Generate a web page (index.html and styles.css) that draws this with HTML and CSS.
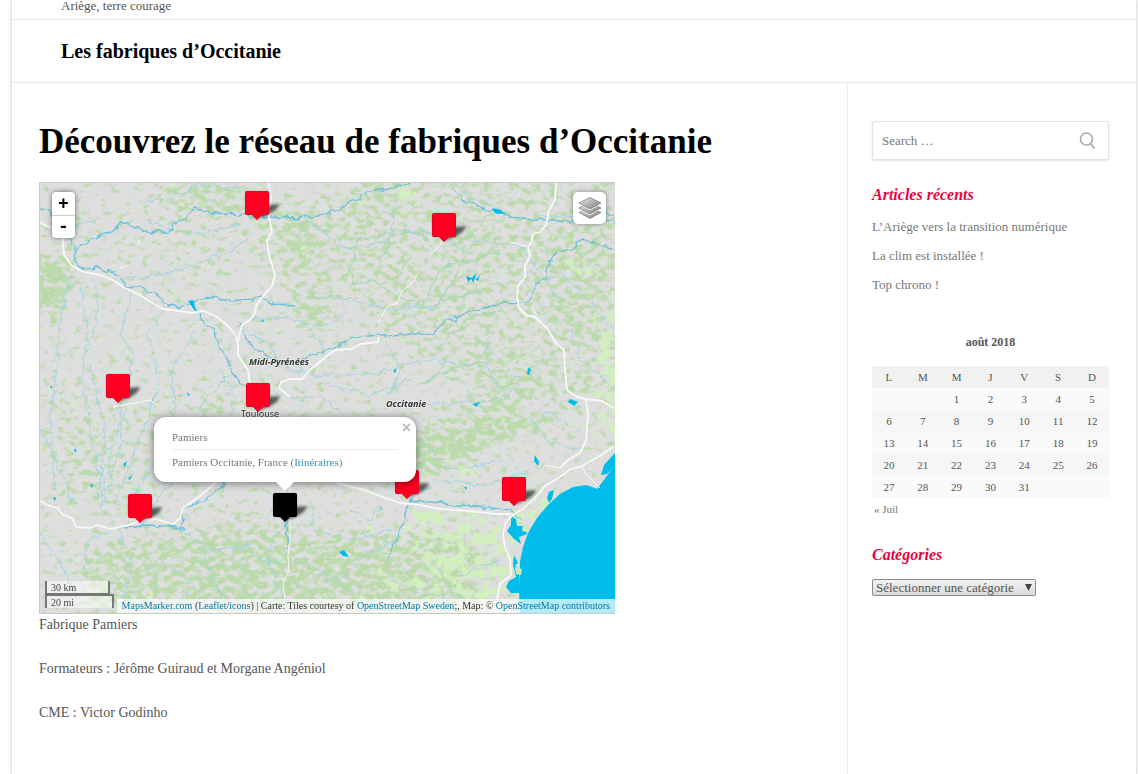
FILE: index.html
```
<!DOCTYPE html>
<html lang="fr">
<head>
<meta charset="utf-8">
<title>Les fabriques d’Occitanie</title>
<link rel="stylesheet" href="styles.css">
</head>
<body>
<div class="page">
  <header>
    <p class="tagline">Ariège, terre courage</p>
    <div class="site-name">Les fabriques d’Occitanie</div>
  </header>
  <div class="columns">
    <main class="content">
      <h1>Découvrez le réseau de fabriques d’Occitanie</h1>
      <div class="map">
        <svg class="tiles" viewBox="40 183 575 430" preserveAspectRatio="xMidYMid slice" role="img" aria-label="Carte des fabriques d’Occitanie">
          <defs>
            <filter id="forest" filterUnits="userSpaceOnUse" x="30" y="173" width="595" height="450" color-interpolation-filters="sRGB">
              <feGaussianBlur in="SourceAlpha" stdDeviation="8" result="density"/>
              <feTurbulence type="fractalNoise" baseFrequency=".12 .17" numOctaves="4" seed="7"/>
              <feColorMatrix values="0 0 0 0 0  0 0 0 0 0  0 0 0 0 0  1 0 0 0 0" result="noise"/>
              <feComposite in="noise" in2="density" operator="arithmetic" k1="0" k2="1" k3=".34" k4="0"/>
              <feComponentTransfer result="cover"><feFuncA type="linear" slope="5" intercept="-3.050"/></feComponentTransfer>
              <feFlood flood-color="#bbdaab"/>
              <feComposite in2="cover" operator="in"/>
            </filter>
            <filter id="scrub" filterUnits="userSpaceOnUse" x="30" y="173" width="595" height="450" color-interpolation-filters="sRGB">
              <feGaussianBlur in="SourceAlpha" stdDeviation="7" result="density"/>
              <feTurbulence type="fractalNoise" baseFrequency=".09" numOctaves="4" seed="23"/>
              <feColorMatrix values="0 0 0 0 0  0 0 0 0 0  0 0 0 0 0  1 0 0 0 0" result="noise"/>
              <feComposite in="noise" in2="density" operator="arithmetic" k1="0" k2="1" k3=".4" k4="0"/>
              <feComponentTransfer result="cover"><feFuncA type="linear" slope="7" intercept="-5.200"/></feComponentTransfer>
              <feFlood flood-color="#d2f0bd"/>
              <feComposite in2="cover" operator="in"/>
            </filter>
            <filter id="meander" filterUnits="userSpaceOnUse" x="30" y="173" width="595" height="450">
              <feTurbulence type="fractalNoise" baseFrequency=".11" numOctaves="2" seed="4"/>
              <feDisplacementMap in="SourceGraphic" scale="9" xChannelSelector="R" yChannelSelector="G"/>
            </filter>
            <filter id="soft" x="-50%" y="-50%" width="200%" height="200%"><feGaussianBlur stdDeviation="1.5"/></filter>
            <g id="pin">
              <path d="M12 28L22 14 34 13Q32 19 26 22Z" fill="#222" opacity=".7" filter="url(#soft)"/>
              <path d="M2 0H22Q24 0 24 2V22Q24 24 22 24H17L12 29L7 24H2Q0 24 0 22V2Q0 0 2 0Z" stroke="#000" stroke-opacity=".18" stroke-width=".7"/>
            </g>
          </defs>
          <rect x="40" y="183" width="575" height="430" fill="#dedede"/>
          <g filter="url(#forest)">
            <rect x="30" y="173" width="600" height="450" opacity=".08"/>
            <path d="M30 257H68L72 280 62 312H30Z"/>
            <path d="M160 173H260L240 215 205 220 160 200Z" opacity=".55"/>
            <path d="M60 215L230 215 220 290 130 270Z" opacity=".1"/>
            <path d="M232 205H300L350 183H400L375 215 350 270 330 330 300 335 280 280 250 250Z" opacity=".35"/>
            <path d="M290 215L312 212 308 262 292 260ZM298 302L318 298 326 318 308 330Z"/>
            <path d="M355 173H620V400H480L430 360 380 330 350 280Z" opacity=".34"/>
            <path d="M445 225H490V250L470 260ZM520 235L560 280 540 330 600 340 610 240Z" opacity=".35"/>
            <path d="M400 450L420 440 470 430 520 420 560 412V422L500 440 450 465 410 475Z"/>
            <path d="M400 440L440 410 520 400 530 430 440 440Z" opacity=".5"/>
            <path d="M475 350L540 370 560 395 480 415Z" opacity=".35"/>
            <path d="M85 550L150 535 250 530 330 540 470 530 490 613H90L80 580Z" opacity=".62"/>
            <path d="M200 500L270 515 350 535 490 535 480 620H200Z" opacity=".25"/>
            <path d="M40 390H70L140 520 60 500Z" opacity=".3"/>
            <path d="M70 400L230 400 200 500 120 500Z" opacity=".14"/>
            <path d="M195 418L220 396 230 395 226 405 205 420Z" opacity=".95"/>
          </g>
          <g filter="url(#scrub)">
            <path d="M400 505L470 510 520 520 510 600 430 580Z" opacity=".7"/>
            <path d="M360 570L480 560 500 613H350Z" opacity=".5"/>
            <path d="M595 300H620V450L600 425Z" opacity=".85"/>
            <path d="M385 183L420 185 410 215 390 205Z" opacity=".6"/>
            <path d="M540 490L560 495 530 525 510 525Z"/>
            <path d="M420 460L480 455 470 480Z" opacity=".7"/>
            <path d="M570 255L600 265 590 280 570 275Z" opacity=".7"/>
          </g>
          <g class="streams" filter="url(#meander)">
            <path d="M72 275L62 310 58 360 50 420 55 490M80 285L88 340 82 380 92 440 106 505M92 278L99 305 90 350M132 290L121 335 134 355 126 400 112 450 100 510M165 305L148 335 160 380 140 440 115 505M195 330L172 370 174 410 160 450 128 508M230 375L205 400 190 430 180 470 150 510M100 220L60 226M40 430L60 470 75 505M118 400L122 440 108 490M40 535L60 560 72 590M112 529L88 540 84 570M118 530L132 565 122 605M182 530L210 550 250 545M200 550L218 590 240 613"/>
            <path d="M145 200L170 198 200 185 250 188M145 220L190 235 240 225M130 280L180 270 220 255 250 240M245 318L280 318 330 325 350 310M300 215L350 250 390 240 395 205M310 295L350 300 390 310 440 305M245 330L270 345 280 365 310 375 370 375 420 360 470 365M460 192L520 220 550 215 614 220M470 240L520 245 560 300M480 340L520 380 500 400 420 405M535 285L560 270 614 330M570 330L580 360 605 380M488 335L485 365 510 400M400 230L440 235 470 255M265 455L290 480 285 520 265 555 285 600M310 500L315 530 350 540 395 530M230 540L260 560 310 565 345 590M395 540L365 555 340 580M410 500L440 480 490 485 530 470M420 440L450 470 500 460M530 415L545 440 580 450M545 410L580 430M440 600L470 570 500 560M385 505L370 520 350 510M160 560L190 580 180 610"/>
            <path d="M270 390L300 400 320 395 360 430M330 385L370 395 410 380M385 340L400 370 390 395M325 350L310 330 330 310M90 365L105 430 98 500M220 370L235 400 228 440"/>
          </g>
          <path class="valleys" filter="url(#meander)" d="M352 285L350 265 360 240 380 235 410 232 430 240M350 285L375 280 395 295 430 310 445 300 480 290M395 290L400 275 410 255M420 310L435 280 450 260M440 265L470 262 500 250M440 302L460 270M380 260L390 240M440 345L470 318 500 312M420 385L450 370 490 360"/>
          <g class="rivers" filter="url(#meander)">
            <path d="M40 208L48 211 60 225 70 238 76 250 75 262 82 268 100 269 120 275 126 288 140 287 155 295 166 305 178 308 192 303 203 320 215 333 220 348 228 362 234 373 245 385 255 398 262 430 245 460 222 485 205 500 184 508 180 530M76 250L85 241 100 235 112 232 122 222 135 227 150 233 165 231 180 222 195 209 225 213 258 217 300 218 335 212 358 198 370 192 410 183"/>
            <path d="M192 302L215 297 230 301 262 298 272 304 295 305M240 325L250 345 268 355 290 365 300 360 312 355 330 350 360 337 378 335 430 334 445 322 475 310 500 304 528 303 535 285 545 278 553 255 575 248 582 240 614 248M450 183L462 200 495 213 530 220 560 220 614 222M112 530L150 525 185 528M285 515L288 550M410 500L400 530 388 560M410 500L460 505 511 510 520 520M575 210L600 210 614 215"/>
          </g>
          <g class="water">
            <path d="M595 488L586 485 573 487 560 494 548 505 537 518 528 533 523 547 520 562 519 590 520 613H615V464L604 480 597 489Z"/>
            <path d="M601 475L604 465 615 453V465L607 474ZM511 516L516 519 517 526 525 526 527 534 519 537 521 544 514 539 507 531 511 525ZM549 492L554 490 552 499 549 503 547 498ZM514 555L518 563 515 565 519 571 520 593 511 593 506 587 509 581 516 577 513 564Z"/>
            <path d="M466 276L472 278 476 273 475 280 480 275 478 281 474 279V283L471 279 468 282ZM339 552L344 550 349 557 343 556ZM570 399L578 402 574 406 568 402ZM188 301L193 300 197 312 194 309ZM535 455L539 462 538 466 534 461ZM528 368L531 369 529 375 527 374ZM123 464L127 461 125 467ZM128 479L133 474 130 480ZM90 485L93 484 92 488ZM492 208L501 210 504 214 495 213ZM473 404L480 402 476 407ZM53 498L56 497 55 501ZM393 371L397 368 395 373ZM262 318L264 322 262 322ZM464 487L467 487 466 490ZM50 388L52 385 52 388ZM75 448L77 452 74 451ZM187 392L190 395 188 396Z"/>
          </g>
          <path class="scrubspot" d="M523 524L530 526 527 532 522 531ZM515 567L522 569 521 575 516 574Z"/>
          <g class="roads">
            <path d="M40 222L46 226 61 230 63 240 64 255 72 266 84 272 100 275 113 280 125 288 140 295 152 303 163 309 180 311 192 313 204 311 217 317 228 326 236 336 238 345 238 355 248 370 250 383 256 400"/>
            <path d="M269 183L271 197 269 217 272 232 267 240 269 255 275 275 272 286 260 300 256 306 255 313 250 320 242 325 238 341"/>
            <path d="M290 397L279 388 281 382 290 379 302 379 310 370 322 360 335 350 352 349 360 344 378 342 379 337"/>
            <path d="M556 183L555 200 549 210 546 225 540 232 533 234 531 243 528 247 530 256 525 266 525 277 518 286 517 296 519 308 526 315 535 317 547 328 556 343 564 350 565 370 567 390 577 397 586 399 602 401 614 408M586 400L588 415 586 440 580 453 568 460 560 468"/>
            <path d="M614 446L600 456 582 466 571 469 560 477 545 486 535 498 524 508 513 515 506 522 503 534 505 547 510 560 511 575 500 584 497 600 497 613M511 514L495 514 470 511 440 509 420 505 400 503 380 496 365 490 340 484 300 460 265 420"/>
            <path d="M40 501L50 506 58 508 62 514 72 518 76 527 90 528 97 525 110 529 125 526 140 521 155 519 173 524 180 518 183 508 200 496 215 483 235 470 250 440 258 410"/>
            <path class="minor" d="M378 323L387 307 397 303 402 291 413 282 417 275M430 255L437 249 442 242M510 242L528 247M531 306L537 315M113 407L135 403 150 400 157 405M290 485L290 540 288 556 289 570 283 583 285 600 282 613M560 468L545 465 542 470M582 466L586 474 600 488M120 268L127 266M137 246L140 240"/>
          </g>
          <g class="places">
            <text class="region" x="249" y="365">Midi-Pyrénées</text>
            <text class="region" x="386" y="407">Occitanie</text>
            <text class="city" x="241" y="417">Toulouse</text>
          </g>
          <g fill="#ff0022">
            <use href="#pin" x="245" y="191"/>
            <use href="#pin" x="432" y="213"/>
            <use href="#pin" x="106" y="374"/>
            <use href="#pin" x="246" y="383"/>
            <use href="#pin" x="395" y="470"/>
            <use href="#pin" x="502" y="477"/>
            <use href="#pin" x="128" y="494"/>
            <use href="#pin" x="273" y="493" fill="#000"/>
          </g>
        </svg>
        <div class="zoom-bar">
          <button type="button" aria-label="Zoom avant">+</button>
          <button type="button" aria-label="Zoom arrière">-</button>
        </div>
        <button class="layers" type="button" aria-label="Couches">
          <svg width="24" height="24" viewBox="0 0 24 24">
            <defs><linearGradient id="sheet" x2="1" y2="1"><stop stop-color="#ededed"/><stop offset="1" stop-color="#777"/></linearGradient></defs>
            <g fill="url(#sheet)" stroke="#777" stroke-width=".7">
              <path d="M1 16.500L12 11 23 16.500 12 22.500Z"/>
              <path d="M1 12L12 6.500 23 12 12 18Z" stroke="#fff" stroke-width="2"/>
              <path d="M1 12L12 6.500 23 12 12 18Z"/>
              <path d="M1 7L12 1.500 23 7 12 13Z" stroke="#fff" stroke-width="2"/>
              <path d="M1 7L12 1.500 23 7 12 13Z"/>
            </g>
          </svg>
        </button>
        <div class="popup">
          <button class="close" type="button" aria-label="Fermer">×</button>
          <div class="popup-title">Pamiers</div>
          <div class="popup-address">Pamiers Occitanie, France (<a href="#">Itinéraires</a>)</div>
        </div>
        <div class="scale">
          <div class="km">30 km</div>
          <div class="mi">20 mi</div>
        </div>
        <div class="attribution"><a href="#">MapsMarker.com</a> (<a href="#">Leaflet</a>/<a href="#">icons</a>) | Carte: Tiles courtesy of <a href="#">OpenStreetMap Sweden</a>;, Map: © <a href="#">OpenStreetMap contributors</a></div>
      </div>
      <p>Fabrique Pamiers</p>
      <p>Formateurs : Jérôme Guiraud et Morgane Angéniol</p>
      <p>CME : Victor Godinho</p>
    </main>
    <aside class="sidebar">
      <form class="search" role="search">
        <input type="search" placeholder="Search …" aria-label="Search">
        <button type="button" aria-label="Rechercher">
          <svg width="18" height="18" viewBox="0 0 18 18" fill="none" stroke="#aaa" stroke-width="1.700"><circle cx="7.500" cy="7" r="6"/><path d="M11.500 11.500L15.500 16.500"/></svg>
        </button>
      </form>
      <h2>Articles récents</h2>
      <ul class="posts">
        <li><a href="#">L’Ariège vers la transition numérique</a></li>
        <li><a href="#">La clim est installée !</a></li>
        <li><a href="#">Top chrono !</a></li>
      </ul>
      <table class="calendar">
        <caption>août 2018</caption>
        <thead><tr><th>L</th><th>M</th><th>M</th><th>J</th><th>V</th><th>S</th><th>D</th></tr></thead>
        <tbody>
          <tr><td colspan="2"></td><td>1</td><td>2</td><td>3</td><td>4</td><td>5</td></tr>
          <tr><td>6</td><td>7</td><td>8</td><td>9</td><td>10</td><td>11</td><td>12</td></tr>
          <tr><td>13</td><td>14</td><td>15</td><td>16</td><td>17</td><td>18</td><td>19</td></tr>
          <tr><td>20</td><td>21</td><td>22</td><td>23</td><td>24</td><td>25</td><td>26</td></tr>
          <tr><td>27</td><td>28</td><td>29</td><td>30</td><td>31</td><td colspan="2"></td></tr>
        </tbody>
        <tfoot><tr><td colspan="7"><a href="#">« Juil</a></td></tr></tfoot>
      </table>
      <h2><label for="category">Catégories</label></h2>
      <div class="picker">
        <select id="category"><option>Sélectionner une catégorie</option></select>
        <svg width="7" height="8" viewBox="0 0 7 8"><path d="M0 0H7L3.500 7Z" fill="#444"/></svg>
      </div>
    </aside>
  </div>
</div>
</body>
</html>
```
FILE: styles.css
```
* { box-sizing: border-box; }
body {
  margin: 0;
  background: #fff;
  color: #555;
  font: 14px/22px "Liberation Serif", "Times New Roman", serif;
}
a { color: inherit; text-decoration: none; }
.page {
  min-height: 100vh;
  margin: 0 1px 0 11px;
  display: flex;
  flex-direction: column;
  border: solid #e4e4e4;
  border-width: 0 1px;
  box-shadow: 0 0 4px rgba(0, 0, 0, .15);
}
.tagline {
  height: 20px;
  margin: 0;
  padding-left: 49px;
  border-bottom: 1px solid #e9e9e9;
  font-size: 13px;
  line-height: 12px;
}
.site-name {
  padding: 19px 49px;
  border-bottom: 1px solid #e9e9e9;
  color: #000;
  font-size: 20px;
  font-weight: bold;
  line-height: 24px;
}
.columns { flex: 1; display: flex; }
.content { flex: 1; min-width: 0; padding: 36px 27px 0; }
.content h1 {
  margin: 0 0 17px;
  color: #000;
  font-size: 35px;
  line-height: 46px;
}
.content p { margin: 0 0 22px; }
.map {
  position: relative;
  max-width: 576px;
  border: 1px solid #c8c8c8;
  border-right: 0;
  overflow: hidden;
}
.tiles { display: block; width: 100%; height: auto; }
.streams { fill: none; stroke: #a3d3e2; stroke-width: 1; }
.valleys { fill: none; stroke: #a9d8b4; stroke-width: 1.5; }
.rivers { fill: none; stroke: #5fbcdc; stroke-width: 1.3; opacity: .9; }
.water { fill: #00bceb; }
.scrubspot { fill: #cfe8b8; }
.roads { fill: none; stroke: #f8f8f8; stroke-width: 1.8; stroke-linejoin: round; }
.roads .minor { stroke-width: 1; }
.places { fill: #333; stroke: #eee; stroke-width: 2px; stroke-opacity: .7; paint-order: stroke; }
.region { font: italic bold 9px "Noto Sans", sans-serif; }
.city { font: 9px "Noto Sans", sans-serif; }
.zoom-bar {
  position: absolute;
  top: 9px;
  left: 12px;
  width: 23px;
  border-radius: 4px;
  background: #fff;
  box-shadow: 0 0 5px rgba(0, 0, 0, .55);
}
.zoom-bar button {
  display: block;
  width: 100%;
  height: 23px;
  padding: 0;
  border: 0;
  background: none;
  color: #000;
  font: bold 18px/22px "Liberation Mono", monospace;
}
.zoom-bar button + button { border-top: 1px solid #ccc; }
.layers {
  position: absolute;
  top: 9px;
  right: 9px;
  width: 33px;
  height: 32px;
  display: grid;
  place-items: center;
  padding: 0;
  border: 0;
  border-radius: 5px;
  background: #fff;
  box-shadow: 0 0 5px rgba(0, 0, 0, .4);
}
.popup {
  position: absolute;
  left: 114px;
  top: 234px;
  width: 262px;
  padding: 13px 18px;
  border-radius: 12px;
  background: #fff;
  box-shadow: 0 1px 9px rgba(0, 0, 0, .5);
  color: #777;
  font-size: 11px;
  line-height: 14px;
}
.popup::after {
  content: "";
  position: absolute;
  left: 122px;
  top: 100%;
  border: 9px solid transparent;
  border-top-color: #fff;
  border-bottom: 0;
}
.popup-title { padding-bottom: 5px; border-bottom: 1px solid #ebece3; }
.popup-address { padding-top: 5px; }
.popup a { color: #3495bf; }
.close {
  position: absolute;
  top: 4px;
  right: 5px;
  padding: 0;
  border: 0;
  background: none;
  color: #bbb;
  font: bold 16px/14px "Liberation Sans", sans-serif;
}
.scale { position: absolute; left: 5px; bottom: 5px; color: #444; font-size: 10px; line-height: 13px; }
.scale div { padding-left: 4px; border: 2px solid #777; background: rgba(255, 255, 255, .5); }
.scale .km { width: 65px; height: 14px; border-top: 0; }
.scale .mi { width: 69px; height: 14px; margin-top: -1px; border-bottom: 0; }
.attribution {
  position: absolute;
  right: 0;
  bottom: 0;
  padding: 0 5px;
  background: rgba(255, 255, 255, .7);
  color: #333;
  font-size: 10px;
  line-height: 14px;
  white-space: nowrap;
}
.attribution a { color: #0078a8; }
.sidebar { width: 289px; padding: 38px 27px 0 24px; border-left: 1px solid #e9e9e9; font-size: 13px; }
.search {
  display: flex;
  height: 39px;
  border: 1px solid #e2e2e2;
  border-radius: 2px;
  box-shadow: 0 1px 2px rgba(0, 0, 0, .12);
}
.search input {
  flex: 1;
  min-width: 0;
  padding: 0 9px;
  border: 0;
  background: none;
  color: #777;
  font: 13px "Liberation Serif", serif;
}
.search input::placeholder { color: #777; }
.search button { padding: 0 11px; border: 0; background: none; line-height: 0; }
h2 { margin: 0; color: #e8053f; font-size: 16px; font-style: italic; line-height: 20px; }
.search + h2 { margin-top: 25px; }
.posts { margin: 8px 0 31px; padding: 0; list-style: none; color: #777; }
.posts li { padding: 3px 0 4px; }
.calendar { width: 100%; margin-bottom: 25px; border-collapse: collapse; font-size: 11px; line-height: 22px; text-align: center; }
.calendar caption { padding-bottom: 13px; font-size: 12px; font-weight: bold; }
.calendar th, .calendar td { height: 22px; padding: 0; font-weight: normal; }
.calendar thead { background: #f1f1f1; }
.calendar tbody tr { background: #fafafa; }
.calendar tbody tr:nth-child(even) { background: #f6f6f6; }
.calendar tfoot td { padding-left: 2px; color: #777; text-align: left; }
.picker { display: inline-grid; align-items: center; margin-top: 14px; }
.picker select, .picker svg { grid-area: 1 / 1; }
.picker svg { justify-self: end; margin-right: 4px; pointer-events: none; }
.picker select {
  width: 164px;
  height: 17px;
  padding: 0 3px;
  appearance: none;
  border: 1px solid #8a8a8a;
  border-radius: 2px;
  background: linear-gradient(#f4f4f4, #dadada);
  color: #555;
  font: 13px/15px "Liberation Serif", serif;
}
```
